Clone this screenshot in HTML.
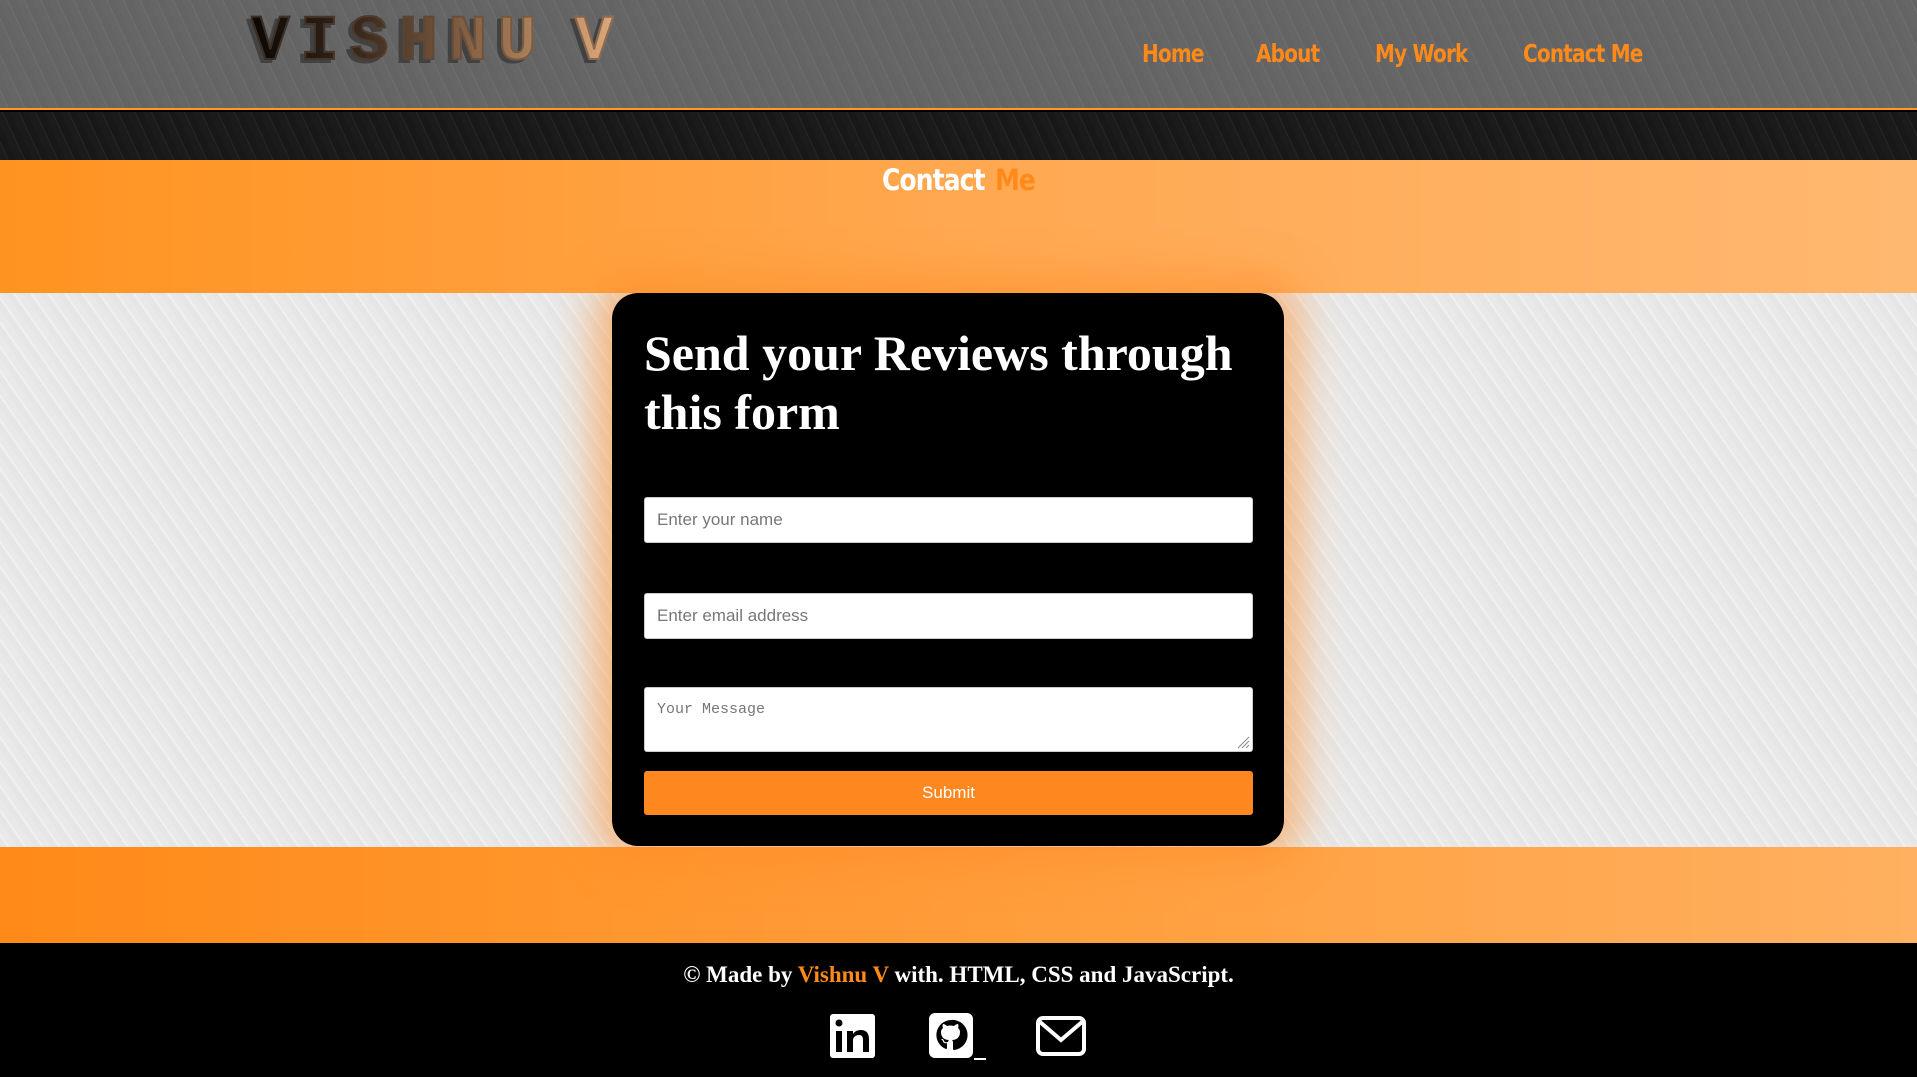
<!DOCTYPE html>
<html><head><meta charset="utf-8">
<style>
*{margin:0;padding:0;box-sizing:border-box}
html,body{width:1917px;height:1077px;overflow:hidden}
body{position:relative;font-family:"Liberation Sans",sans-serif;background:#000}
.hdr{position:absolute;left:0;top:0;width:1917px;height:110px;background:repeating-linear-gradient(65deg,#666 0 7px,#6e6e6e 7px 8px,#646464 8px 15px);border-bottom:2px solid #ff9a1f}
.logo{position:absolute;left:251px;top:11px;font:bold 64px/64px "Liberation Mono",monospace;letter-spacing:11px;word-spacing:-22px;background:linear-gradient(90deg,#0a0604,#3a2a1e 30%,#8a6446 60%,#e2ad7e);-webkit-background-clip:text;background-clip:text;color:transparent;-webkit-text-stroke:2px rgba(90,70,55,.6);filter:drop-shadow(-4px 3px 0 rgba(0,0,0,.35))}
.nav{position:absolute;top:39px;font:bold 25px/30px "DejaVu Sans",sans-serif;color:#ff8a1a;letter-spacing:-1px;transform:scaleX(.8);transform-origin:left}
.dark{position:absolute;left:0;top:112px;width:1917px;height:48px;background:repeating-linear-gradient(65deg,#1b1b1b 0 7px,#262626 7px 8px,#181818 8px 15px)}
.or1{position:absolute;left:0;top:160px;width:1917px;height:133px;background:linear-gradient(90deg,#ff9320,#ffa850 50%,#ffb870)}
.ct{position:absolute;left:0;width:1917px;top:162px;text-align:center;font:bold 29px/36px "DejaVu Sans",sans-serif;color:#fff;letter-spacing:-1px;transform:scaleX(.86)}
.ct span{color:#ff8a1a;margin-left:12px}
.gray{position:absolute;left:0;top:293px;width:1917px;height:554px;background:repeating-linear-gradient(55deg,#e6e6e6 0 6px,#f0f0f0 6px 8px,#e9e9e9 8px 14px)}
.or2{position:absolute;left:0;top:847px;width:1917px;height:96px;background:linear-gradient(90deg,#ff8a18,#ffa040 60%,#ffb060)}
.card{position:absolute;left:612px;top:293px;width:672px;height:553px;background:#000;border-radius:26px;box-shadow:0 0 40px 18px rgba(255,140,40,.55)}
.card h1{position:absolute;left:32px;top:31px;width:630px;font:bold 50px/59px "Liberation Serif",serif;color:#fff}
.inp{position:absolute;left:32px;width:609px;background:#fff;border:1px solid #ccc;border-radius:3px;color:#777;font:17px "Liberation Sans",sans-serif;padding-left:12px}
.btn{position:absolute;left:32px;top:478px;width:609px;height:44px;background:#ff8720;border-radius:3px;color:#fff;text-align:center;font:17px/44px "Liberation Sans",sans-serif}
.foot{position:absolute;left:0;top:962px;width:1917px;text-align:center;font:bold 23px/26px "Liberation Serif",serif;color:#fff}
.foot span{color:#ff8a1a}
.ic{position:absolute;top:1013px}
</style></head><body>
<div class="hdr">
<div class="logo">VISHNU V</div>
<div class="nav" style="left:1142px">Home</div>
<div class="nav" style="left:1256px">About</div>
<div class="nav" style="left:1375px">My Work</div>
<div class="nav" style="left:1523px">Contact Me</div>
</div>
<div class="dark"></div>
<div class="or1"></div>
<div class="ct">Contact<span>Me</span></div>
<div class="gray"></div>
<div class="or2"></div>
<div class="card">
<h1>Send your Reviews through this form</h1>
<div class="inp" style="top:204px;height:46px;line-height:44px">Enter your name</div>
<div class="inp" style="top:300px;height:46px;line-height:44px">Enter email address</div>
<div class="inp" style="top:394px;height:65px;padding-top:13px;font:15px 'Liberation Mono',monospace;color:#777">Your Message
<svg style="position:absolute;right:2px;bottom:2px" width="14" height="14"><path d="M13 2L2 13M13 6L6 13M13 10L10 13" stroke="#888" stroke-width="1"/></svg></div>
<div class="btn">Submit</div>
</div>
<div class="foot">© Made by <span>Vishnu V</span> with. HTML, CSS and JavaScript.</div>
<svg class="ic" style="left:830px" width="45" height="46" viewBox="0 0 45 46"><rect x="0" y="1" width="45" height="44" rx="3" fill="#fff"/><rect x="6" y="18" width="6" height="21" fill="#000"/><circle cx="9" cy="10" r="3.5" fill="#000"/><path d="M17 18h6v3c2-3 5-4 8-4 5 0 8 3 8 9v13h-6V27c0-3-1-5-4-5s-6 2-6 5v12h-6z" fill="#000"/></svg>
<svg class="ic" style="left:929px" width="58" height="48" viewBox="0 0 58 48"><rect x="0" y="0" width="44" height="45" rx="6" fill="#fff"/><path d="M22 7a15 15 0 0 0-5 29c1 0 1-1 1-1v-5c-3 1-4-1-4-2-1-1-2-2-2-2h1c1 0 2 1 2 2 1 2 3 1 4 1 0-1 1-2 1-2-4 0-8-2-8-8 0-2 1-3 2-4 0 0-1-2 0-4 0 0 2 0 4 2a13 13 0 0 1 7 0c2-2 4-2 4-2 1 2 0 4 0 4 1 1 2 2 2 4 0 6-4 8-8 8 1 1 1 2 1 3v6s0 1 1 1A15 15 0 0 0 22 7z" fill="#000"/><rect x="45" y="45" width="12" height="2" fill="#fff"/></svg>
<svg class="ic" style="left:1036px;top:1016px" width="50" height="40" viewBox="0 0 50 40"><rect x="2" y="2" width="46" height="36" rx="5" fill="none" stroke="#fff" stroke-width="4"/><path d="M4 6l21 18 21-18" fill="none" stroke="#fff" stroke-width="4"/></svg>
</body></html>
